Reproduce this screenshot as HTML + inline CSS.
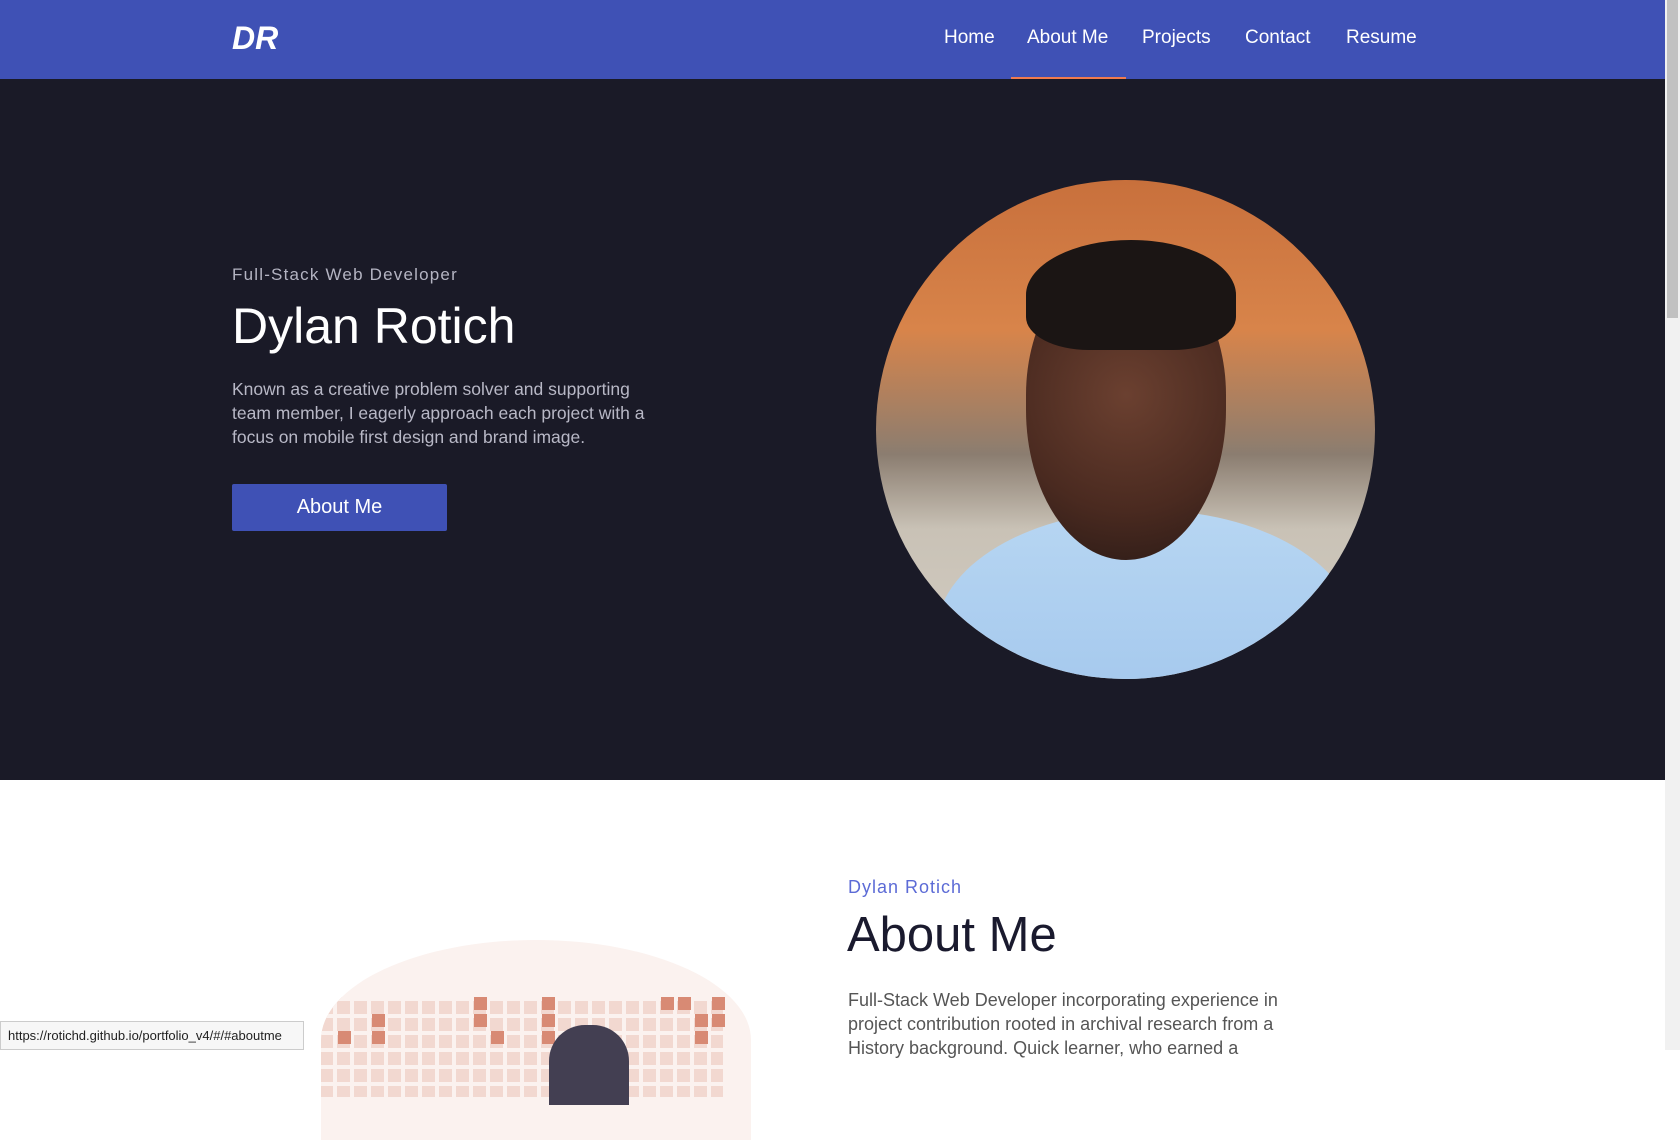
<!DOCTYPE html>
<html><head><meta charset="utf-8"><style>
*{margin:0;padding:0;box-sizing:border-box}
body{width:1680px;height:1050px;overflow:hidden;font-family:"Liberation Sans",sans-serif;background:#fff;position:relative}
.nav{position:absolute;left:0;top:0;width:1665px;height:79px;background:#3f51b5}
.logo{position:absolute;left:232px;top:20px;color:#fff;font-weight:bold;font-style:italic;font-size:32px}
.nav a{position:absolute;top:27px;color:#fff;font-size:19px;text-decoration:none}
.ul{position:absolute;left:1011px;top:77px;width:115px;height:2px;background:#f07b4f}
.hero{position:absolute;left:0;top:79px;width:1665px;height:701px;background:#1a1a27}
.sb{position:absolute;right:0;top:0;width:15px;height:1050px;background:#f1f1f1}
.sb div{position:absolute;left:2px;top:0;width:11px;height:318px;background:#c1c1c1}
.t{position:absolute;white-space:nowrap}
.btn{position:absolute;left:232px;width:215px;height:47px;background:#3f51b5;color:#fff;font-size:20px;text-align:center;line-height:47px;border-radius:2px}
.photo{position:absolute;left:876px;width:499px;height:499px;border-radius:50%;overflow:hidden;
background:linear-gradient(180deg,#c8703c 0%,#d8844a 30%,#8b7d70 55%,#c9c2b6 70%,#d2ccc2 100%)}
.face{position:absolute;left:150px;top:80px;width:200px;height:300px;border-radius:45% 45% 50% 50%;background:radial-gradient(circle at 50% 45%,#6b4030 0%,#4a2a20 60%,#2a1a16 100%)}
.hair{position:absolute;left:150px;top:60px;width:210px;height:110px;border-radius:50% 50% 30% 30%;background:#1b1514}
.shirt{position:absolute;left:60px;top:330px;width:420px;height:250px;border-radius:50% 50% 0 0;background:linear-gradient(180deg,#b7d6f2,#9fc4ec)}
.blob{position:absolute;left:321px;top:940px;width:430px;height:200px;border-radius:50% 50% 0 0;background:#fbf2ef;overflow:hidden}
.grid{position:absolute;left:-18px;top:57px;width:420px;height:100px;
background-image:linear-gradient(90deg,transparent 13px,#fbf2ef 13px),linear-gradient(0deg,transparent 13px,#fbf2ef 13px);
background-color:#f2d8d0;background-size:17px 17px}
.d{position:absolute;width:13px;height:13px;background:#d88a74}
.status{position:absolute;left:0;top:1021px;width:304px;height:29px;background:#f7f7f7;border:1px solid #ccc;font-size:13px;line-height:27px;padding-left:7px;color:#222}
</style></head><body>
<div class="nav">
<div class="logo">DR</div>
<a style="left:944px">Home</a>
<a style="left:1027px">About Me</a>
<a style="left:1142px">Projects</a>
<a style="left:1245px">Contact</a>
<a style="left:1346px">Resume</a>
<div class="ul"></div>
</div>
<div class="hero">
<div class="t" style="left:232px;top:186px;color:#b4b4c2;font-size:17px;letter-spacing:1.2px">Full-Stack Web Developer</div>
<div class="t" style="left:232px;top:218px;color:#fff;font-size:50px">Dylan Rotich</div>
<div class="t" style="left:232px;top:298px;color:#b8b8c6;font-size:17.5px;line-height:24px">Known as a creative problem solver and supporting<br>team member, I eagerly approach each project with a<br>focus on mobile first design and brand image.</div>
<div class="btn" style="top:405px">About Me</div>
<div class="photo" style="top:101px"><div class="shirt"></div><div class="face"></div><div class="hair"></div></div>
</div>
<div class="t" style="left:848px;top:877px;color:#5c6bd6;font-size:18px;letter-spacing:1px">Dylan Rotich</div>
<div class="t" style="left:847px;top:907px;color:#1a1a2e;font-size:49px">About Me</div>
<div class="t" style="left:848px;top:988px;color:#555;font-size:18px;line-height:24px">Full-Stack Web Developer incorporating experience in<br>project contribution rooted in archival research from a<br>History background. Quick learner, who earned a</div>
<div class="blob"><div class="grid">
<div class="d" style="left:171px;top:0"></div><div class="d" style="left:239px;top:0"></div><div class="d" style="left:358px;top:0"></div><div class="d" style="left:375px;top:0"></div><div class="d" style="left:409px;top:0"></div>
<div class="d" style="left:69px;top:17px"></div><div class="d" style="left:171px;top:17px"></div><div class="d" style="left:239px;top:17px"></div><div class="d" style="left:392px;top:17px"></div><div class="d" style="left:409px;top:17px"></div>
<div class="d" style="left:35px;top:34px"></div><div class="d" style="left:69px;top:34px"></div><div class="d" style="left:188px;top:34px"></div><div class="d" style="left:239px;top:34px"></div><div class="d" style="left:392px;top:34px"></div>
</div><div style="position:absolute;left:228px;top:85px;width:80px;height:80px;border-radius:45% 45% 0 0;background:#433f52"></div></div>
<div class="status">https://rotichd.github.io/portfolio_v4/#/#aboutme</div>
<div class="sb"><div></div></div>
</body></html>
